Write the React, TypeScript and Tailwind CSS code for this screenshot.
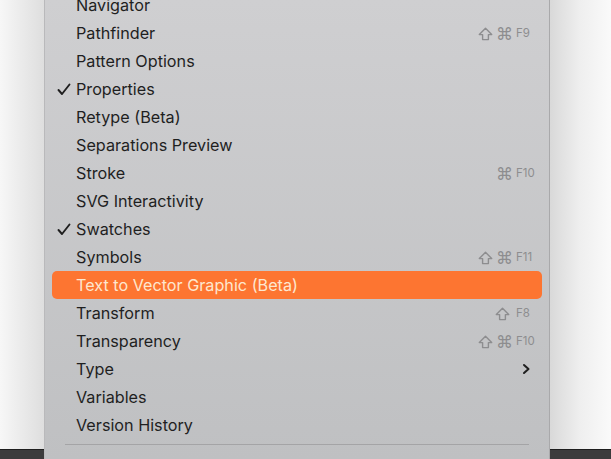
import React from 'react';

type Item = { label: string; checked?: boolean; mods?: string[]; key?: string; sub?: boolean; active?: boolean };

const items: Item[] = [
  { label: 'Navigator' },
  { label: 'Pathfinder', mods: ['shift', 'cmd'], key: 'F9' },
  { label: 'Pattern Options' },
  { label: 'Properties', checked: true },
  { label: 'Retype (Beta)' },
  { label: 'Separations Preview' },
  { label: 'Stroke', mods: ['cmd'], key: 'F10' },
  { label: 'SVG Interactivity' },
  { label: 'Swatches', checked: true },
  { label: 'Symbols', mods: ['shift', 'cmd'], key: 'F11' },
  { label: 'Text to Vector Graphic (Beta)', active: true },
  { label: 'Transform', mods: ['shift'], key: 'F8' },
  { label: 'Transparency', mods: ['shift', 'cmd'], key: 'F10' },
  { label: 'Type', sub: true },
  { label: 'Variables' },
  { label: 'Version History' },
];

const Mod: React.FC<{ m: string }> = ({ m }) =>
  m === 'shift' ? (
    <svg width="15" height="14" viewBox="0 0 15 14">
      <path d="M7.5 1.3 L13.7 7.6 H10.4 V12.6 H4.6 V7.6 H1.3 Z" fill="none" stroke="#8d8d8f" strokeWidth="1.4" strokeLinejoin="round" />
    </svg>
  ) : (
    <span className="w-[14px] text-center text-[17px] leading-none" style={{ fontFamily: '"DejaVu Sans", sans-serif' }}>
      ⌘
    </span>
  );

const Row: React.FC<{ item: Item }> = ({ item }) => (
  <div
    className={
      'flex items-center h-[28px] mx-[7px] pl-[5px] pr-[4px] rounded-[5px] ' +
      (item.active ? 'bg-[#fd7531] text-[#fde7cf]' : 'text-[#1f1f1f]')
    }
  >
    <span className="w-[19px] flex items-center">
      {item.checked && (
        <svg width="14" height="13" viewBox="0 0 14 13">
          <path d="M1.5 7 L5 11 L12.5 1.5" fill="none" stroke="#1f1f1f" strokeWidth="1.9" strokeLinecap="round" strokeLinejoin="round" />
        </svg>
      )}
    </span>
    <span className="flex-1 text-[16.2px] leading-none">{item.label}</span>
    {item.key && (
      <span className="flex items-center text-[#8d8d8f] leading-none translate-y-[1px]">
        <span className="flex items-center gap-[3px]">
          {item.mods?.map((m) => (
            <Mod key={m} m={m} />
          ))}
        </span>
        <span className="w-[22px] ml-[6px] text-[11.5px]">{item.key}</span>
      </span>
    )}
    {item.sub && (
      <svg width="10" height="12" viewBox="0 0 10 12" className="mr-[7px]">
        <path d="M3 2 L7.5 6 L3 10" fill="none" stroke="#1f1f1f" strokeWidth="2" strokeLinecap="round" strokeLinejoin="round" />
      </svg>
    )}
  </div>
);

export default function App() {
  return (
    <div className="w-[611px] h-[459px] overflow-hidden flex bg-white" style={{ fontFamily: 'Inter, "Noto Sans", sans-serif' }}>
      <div className="w-[44px] flex flex-col">
        <div className="flex-1 bg-gradient-to-r from-[#f7f7f7] to-[#dedede]" />
        <div className="h-[10px] bg-[#3b3b3c] border-t border-[#1e1e1e]" />
      </div>
      <div className="w-[506px] flex flex-col bg-gradient-to-b from-[#cfcfd1] to-[#bfc0c2] border-l border-[#b9b9bb] border-r border-r-[#a9a9ab]">
        <div className="-mt-[9px]">
          {items.map((it) => (
            <Row key={it.label} item={it} />
          ))}
        </div>
        <div className="mt-[5px] mx-[20px] h-px bg-[#a4a4a6]" />
      </div>
      <div className="flex-1 flex flex-col">
        <div className="flex-1 bg-gradient-to-r from-[#d9d9d9] via-[#efefef] to-[#fafafa]" />
        <div className="h-[10px] bg-[#3b3b3c] border-t border-[#1e1e1e]" />
      </div>
    </div>
  );
}
